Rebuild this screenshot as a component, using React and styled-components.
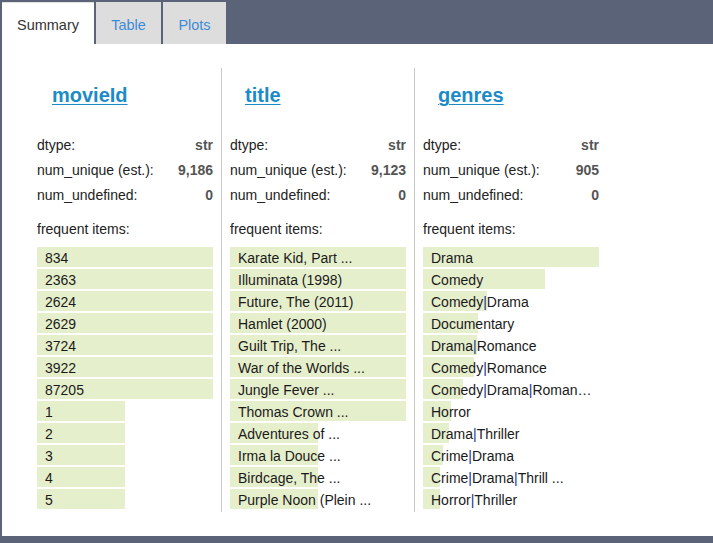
import React from "react";
import styled, { createGlobalStyle } from "styled-components";

const Global = createGlobalStyle`
  html, body {
    margin: 0;
    padding: 0;
    background: #5b6378;
    font-family: "Liberation Sans", Arial, Helvetica, sans-serif;
  }
`;

const Page = styled.div`
  width: 713px;
  height: 543px;
  padding: 2px 0 0 2px;
  box-sizing: border-box;
  display: flex;
  flex-direction: column;
  background: #5b6378;
  overflow: hidden;
`;

const Tabs = styled.div`
  display: flex;
  gap: 2px;
  height: 42px;
`;

const Tab = styled.div`
  display: flex;
  align-items: center;
  justify-content: center;
  box-sizing: border-box;
  width: ${(p) => p.w}px;
  height: 42px;
  padding-top: 2px;
  font-size: 14.5px;
  color: ${(p) => (p.active ? "#333" : "#3d8ad6")};
  background: ${(p) => (p.active ? "#fff" : "#dddddd")};
  border-top: 1px solid ${(p) => (p.active ? "#e2e2e2" : "#dddddd")};
`;

const Panel = styled.div`
  background: #fff;
  height: 492px;
  box-sizing: border-box;
  padding: 24px 0 0 27px;
  display: flex;
  align-items: flex-start;
`;

const Column = styled.div`
  width: 176px;
  padding: 0 8px 3px;
  border-left: ${(p) => (p.first ? "none" : "1px solid #c8c8c8")};
`;

const Header = styled.a`
  display: inline-block;
  margin: 16px 0 0 15px;
  font-size: 20px;
  line-height: 22px;
  font-weight: bold;
  color: #1b8bc8;
  text-decoration: underline;
  text-underline-offset: 2px;
  text-decoration-thickness: 1px;
`;

const Stats = styled.div`
  margin-top: 27px;
`;

const StatRow = styled.div`
  display: flex;
  justify-content: space-between;
  height: 25px;
  line-height: 25px;
  font-size: 14px;
  color: #222;
`;

const StatValue = styled.span`
  font-weight: bold;
  color: #555;
`;

const Label = styled.div`
  margin-top: 11px;
  line-height: 20px;
  font-size: 14px;
  color: #222;
`;

const Items = styled.div`
  margin-top: 8px;
  display: flex;
  flex-direction: column;
  gap: 2px;
`;

const Item = styled.div`
  position: relative;
  height: 20px;
  line-height: 22px;
  font-size: 14px;
  color: #1a1a1a;
  white-space: nowrap;
`;

const Bar = styled.div`
  position: absolute;
  left: 0;
  top: 0;
  bottom: 0;
  background: #e6efcc;
`;

const ItemText = styled.span`
  position: relative;
  padding-left: 8px;
`;

const Pipe = styled.span`
  color: #14338a;
`;

const columns = [
  {
    name: "movieId",
    dtype: "str",
    unique: "9,186",
    undefined: "0",
    items: [
      ["834", 176], ["2363", 176], ["2624", 176], ["2629", 176],
      ["3724", 176], ["3922", 176], ["87205", 176],
      ["1", 88], ["2", 88], ["3", 88], ["4", 88], ["5", 88],
    ],
  },
  {
    name: "title",
    dtype: "str",
    unique: "9,123",
    undefined: "0",
    items: [
      ["Karate Kid, Part ...", 176], ["Illuminata (1998)", 176],
      ["Future, The (2011)", 176], ["Hamlet (2000)", 176],
      ["Guilt Trip, The ...", 176], ["War of the Worlds ...", 176],
      ["Jungle Fever ...", 176], ["Thomas Crown ...", 176],
      ["Adventures of ...", 88], ["Irma la Douce ...", 88],
      ["Birdcage, The ...", 88], ["Purple Noon (Plein ...", 88],
    ],
  },
  {
    name: "genres",
    dtype: "str",
    unique: "905",
    undefined: "0",
    items: [
      ["Drama", 176], ["Comedy", 122], ["Comedy|Drama", 64],
      ["Documentary", 55], ["Drama|Romance", 54], ["Comedy|Romance", 51],
      ["Comedy|Drama|Roman\u2026", 40], ["Horror", 28],
      ["Drama|Thriller", 26], ["Crime|Drama", 20],
      ["Crime|Drama|Thrill ...", 17], ["Horror|Thriller", 17],
    ],
  },
];

function renderLabel(text) {
  const parts = text.split("|");
  return parts.map((p, i) => (
    <React.Fragment key={i}>
      {i > 0 && <Pipe>|</Pipe>}
      {p}
    </React.Fragment>
  ));
}

export default function App() {
  return (
    <Page>
      <Global />
      <Tabs>
        <Tab active w={92}>Summary</Tab>
        <Tab w={65}>Table</Tab>
        <Tab w={63}>Plots</Tab>
      </Tabs>
      <Panel>
        {columns.map((col, ci) => (
          <Column key={col.name} first={ci === 0}>
            <Header href="#">{col.name}</Header>
            <Stats>
              <StatRow>
                <span>dtype:</span>
                <StatValue>{col.dtype}</StatValue>
              </StatRow>
              <StatRow>
                <span>num_unique (est.):</span>
                <StatValue>{col.unique}</StatValue>
              </StatRow>
              <StatRow>
                <span>num_undefined:</span>
                <StatValue>{col.undefined}</StatValue>
              </StatRow>
            </Stats>
            <Label>frequent items:</Label>
            <Items>
              {col.items.map(([text, w], i) => (
                <Item key={i}>
                  <Bar style={{ width: w }} />
                  <ItemText>{renderLabel(text)}</ItemText>
                </Item>
              ))}
            </Items>
          </Column>
        ))}
      </Panel>
    </Page>
  );
}
